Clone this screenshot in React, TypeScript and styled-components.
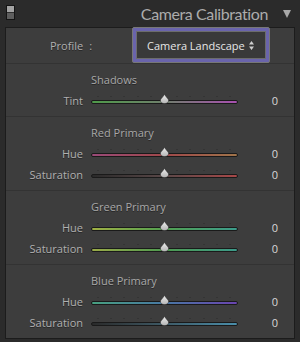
import React from 'react';
import styled, { createGlobalStyle } from 'styled-components';

const GlobalStyle = createGlobalStyle`
  html, body {
    margin: 0;
    padding: 0;
    background: #2b2b2b;
  }
  body {
    font-family: "Open Sans", Lato, sans-serif;
  }
`;

const Frame = styled.div`
  width: 300px;
  height: 342px;
  display: flex;
  flex-direction: column;
  background: #2b2b2b;
  overflow: hidden;
`;

const Header = styled.div`
  height: 27px;
  display: flex;
  align-items: center;
  padding: 0 9px 0 6px;
  box-sizing: border-box;
`;

const Toggle = styled.div`
  width: 9px;
  height: 15px;
  margin-top: -2px;
  box-sizing: border-box;
  border: 1px solid #141414;
  background: linear-gradient(#a3a3a3 0 45%, #2e2e2e 45% 52%, #5e5e5e 52% 100%);
`;

const Title = styled.div`
  margin-left: auto;
  font-family: Lato, "Open Sans", sans-serif;
  font-size: 16px;
  letter-spacing: -0.4px;
  color: #acacac;
  line-height: 27px;
`;

const Caret = styled.svg`
  width: 8px;
  height: 8px;
  margin-left: 15px;
`;

const Panel = styled.div`
  margin: 0 5px;
  border: 1px solid #1c1c1c;
  background: #3d3d3d;
`;

const ProfileRow = styled.div`
  height: 35px;
  display: flex;
  align-items: flex-start;
  padding-left: 44px;
`;

const ProfileLabel = styled.div`
  width: 82px;
  height: 35px;
  display: flex;
  align-items: center;
  font-size: 11px;
  color: #b0b0b0;
  text-shadow: 0 1px 0 #262626;
`;

const Colon = styled.span`
  margin-left: 6px;
`;

const Select = styled.div`
  margin-top: -1px;
  width: 138px;
  height: 36px;
  box-sizing: border-box;
  border: 1px solid #777777;
  border-radius: 2px;
  background: #6a64ac;
  padding: 3px;
`;

const SelectInner = styled.div`
  height: 100%;
  box-sizing: border-box;
  border: 1px solid #6c6c6c;
  background: #393939;
  display: flex;
  align-items: center;
  padding: 0 0 0 10px;
  gap: 4px;
  font-size: 11px;
  color: #e6e6e6;
`;

const Arrows = styled.svg`
  width: 5px;
  height: 9px;
`;

const Section = styled.div`
  border-top: 1px solid #333333;
  padding: 5px 0;
`;

const SectionTitle = styled.div`
  height: 21px;
  line-height: 21px;
  padding-left: 85px;
  font-size: 11px;
  color: #a8a8a8;
  text-shadow: 0 1px 0 #262626;
`;

const Row = styled.div`
  display: grid;
  grid-template-columns: 77px 147px 1fr;
  column-gap: 8px;
  height: 21px;
  align-items: center;
  padding-right: 16px;
`;

const Label = styled.div`
  text-align: right;
  font-size: 11px;
  color: #b0b0b0;
  text-shadow: 0 1px 0 #262626;
`;

const Value = styled.div`
  text-align: right;
  font-size: 11px;
  color: #d8d8d8;
`;

const SliderBox = styled.div`
  position: relative;
  height: 21px;
  display: flex;
  flex-direction: column;
  justify-content: center;
`;

const Ticks = styled.div`
  display: flex;
  justify-content: space-between;
  padding: 0 7px 0 6px;
  height: 1px;
  margin-bottom: 3px;
  margin-top: -2px;
`;

const Tick = styled.span`
  width: 2px;
  height: 1px;
  background: #343434;
`;

const Track = styled.div<{ $gradient: string }>`
  height: 4px;
  box-sizing: border-box;
  border: 1px solid #1a1a1a;
  border-radius: 2px;
  background: ${(p) => p.$gradient};
`;

const Thumb = styled.svg`
  position: absolute;
  left: calc(50% - 4.5px);
  top: 4px;
  width: 9px;
  height: 10px;
`;

type SliderDef = { label: string; gradient: string };
type SectionDef = { title: string; rows: SliderDef[] };

const sections: SectionDef[] = [
  {
    title: 'Shadows',
    rows: [{ label: 'Tint', gradient: 'linear-gradient(to right, #4f9a4a, #6f7f6c 50%, #a850b0)' }],
  },
  {
    title: 'Red Primary',
    rows: [
      { label: 'Hue', gradient: 'linear-gradient(to right, #9a4a78, #a0484a 50%, #a0744a)' },
      { label: 'Saturation', gradient: 'linear-gradient(to right, #2a2a2a, #5a4848 50%, #a84848)' },
    ],
  },
  {
    title: 'Green Primary',
    rows: [
      { label: 'Hue', gradient: 'linear-gradient(to right, #a0b044, #52a050 50%, #3c9c8c)' },
      { label: 'Saturation', gradient: 'linear-gradient(to right, #9aaa48, #4e9a50 50%, #3c9a8a)' },
    ],
  },
  {
    title: 'Blue Primary',
    rows: [
      { label: 'Hue', gradient: 'linear-gradient(to right, #48a080, #4878a4 50%, #6a44b0)' },
      { label: 'Saturation', gradient: 'linear-gradient(to right, #2a2a2a, #3e5a66 50%, #4a8eaa)' },
    ],
  },
];

const Slider: React.FC<{ gradient: string }> = ({ gradient }) => (
  <SliderBox>
    <Ticks>
      {Array.from({ length: 11 }).map((_, i) => (
        <Tick key={i} />
      ))}
    </Ticks>
    <Track $gradient={gradient} />
    <Thumb viewBox="0 0 9 10">
      <defs>
        <linearGradient id="thumbFill" x1="0" y1="0" x2="0" y2="1">
          <stop offset="0" stopColor="#eeeeee" />
          <stop offset="1" stopColor="#b4b4b4" />
        </linearGradient>
      </defs>
      <path
        d="M4.5 0.3 C5.2 1.8 6.6 3.3 8 4.9 C9.2 6.3 8.6 9.5 4.5 9.6 C0.4 9.5 -0.2 6.3 1 4.9 C2.4 3.3 3.8 1.8 4.5 0.3Z"
        fill="url(#thumbFill)"
        stroke="#2a2a2a"
        strokeWidth="0.5"
      />
    </Thumb>
  </SliderBox>
);

export default function App() {
  return (
    <Frame>
      <GlobalStyle />
      <Header>
        <Toggle />
        <Title>Camera Calibration</Title>
        <Caret viewBox="0 0 8 8">
          <path d="M0 0 L8 0 L4 8 Z" fill="#a8a8a8" />
        </Caret>
      </Header>
      <Panel>
        <ProfileRow>
          <ProfileLabel>
            Profile<Colon>:</Colon>
          </ProfileLabel>
          <Select>
            <SelectInner>
              Camera Landscape
              <Arrows viewBox="0 0 5 9">
                <path d="M2.5 0 L5 3.5 L0 3.5 Z M0 5.5 L5 5.5 L2.5 9 Z" fill="#cfcfcf" />
              </Arrows>
            </SelectInner>
          </Select>
        </ProfileRow>
        {sections.map((s) => (
          <Section key={s.title}>
            <SectionTitle>{s.title}</SectionTitle>
            {s.rows.map((r) => (
              <Row key={r.label}>
                <Label>{r.label}</Label>
                <Slider gradient={r.gradient} />
                <Value>0</Value>
              </Row>
            ))}
          </Section>
        ))}
      </Panel>
    </Frame>
  );
}
